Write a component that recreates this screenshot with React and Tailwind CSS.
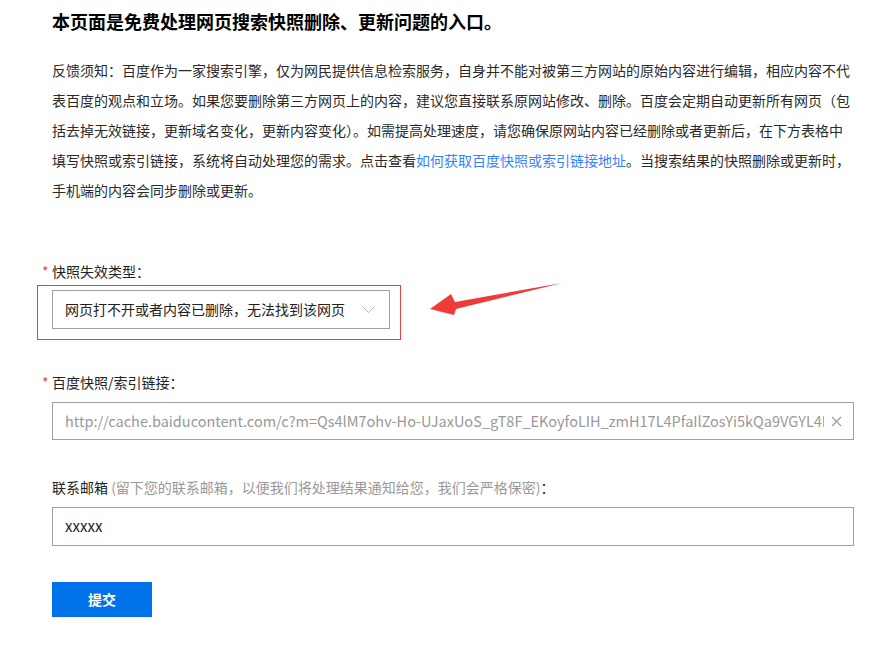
import { X } from 'lucide-react';

export default function App() {
  return (
    <div className="min-h-[660px] bg-white font-['Microsoft_YaHei','Noto_Sans_CJK_SC',sans-serif] text-[#333]">
      <div className="w-[802px] ml-[52px] pt-[7px]">
        <h1 className="text-[18px] leading-[28px] font-bold text-black">
          本页面是免费处理网页搜索快照删除、更新问题的入口。
        </h1>

        <p className="mt-[20px] text-[14px] leading-[30px] whitespace-nowrap text-[#2a2a2a]">
          反馈须知：百度作为一家搜索引擎，仅为网民提供信息检索服务，自身并不能对被第三方网站的原始内容进行编辑，相应内容不代<br />
          表百度的观点和立场。如果您要删除第三方网页上的内容，建议您直接联系原网站修改、删除。百度会定期自动更新所有网页（包<br />
          括去掉无效链接，更新域名变化，更新内容变化）。如需提高处理速度，请您确保原网站内容已经删除或者更新后，在下方表格中<br />
          填写快照或索引链接，系统将自动处理您的需求。点击查看
          <a className="text-[#3385ff]">如何获取百度快照或索引链接地址</a>
          。当搜索结果的快照删除或更新时，<br />
          手机端的内容会同步删除或更新。
        </p>

        {/* 快照失效类型 */}
        <div className="mt-[56px]">
          <label className="block text-[14px] leading-[20px] text-[#222]">
            <span className="inline-block w-[10px] -ml-[10px] text-[#e84040]">*</span>
            快照失效类型：
          </label>
          <div className="relative mt-[9px] w-[338px]">
            <div className="h-[39px] border border-[#a0a0a0] flex items-center justify-between pl-[12px] pr-[14px] text-[14px] text-[#222]">
              <span>网页打不开或者内容已删除，无法找到该网页</span>
              <svg width="13" height="8" viewBox="0 0 13 8" className="mt-[1px]">
                <polyline points="0.5,0.5 6.5,6.5 12.5,0.5" fill="none" stroke="#b5b5b5" strokeWidth="1" />
              </svg>
            </div>
            <div className="absolute left-[-15px] top-[-5px] w-[364px] h-[55px] border border-[#e84040] pointer-events-none" />
            <svg className="absolute left-[373px] top-[-11px]" width="145" height="40" viewBox="0 0 145 40">
              <polygon points="5,30 26,15 30,23 137,4 31,30 29,36" fill="#f03b3b" />
            </svg>
          </div>
        </div>

        {/* 百度快照/索引链接 */}
        <div className="mt-[43px]">
          <label className="block text-[14px] leading-[20px] text-[#222]">
            <span className="inline-block w-[10px] -ml-[10px] text-[#e84040]">*</span>
            百度快照/索引链接：
          </label>
          <div className="mt-[10px] h-[38px] border border-[#a0a0a0] flex items-center pl-[12px] pr-[8px]">
            <div className="flex-1 overflow-hidden whitespace-nowrap text-[14.5px] text-[#999]">
              http://cache.baiducontent.com/c?m=Qs4lM7ohv-Ho-UJaxUoS_gT8F_EKoyfoLIH_zmH17L4PfaIlZosYi5kQa9VGYL4N
            </div>
            <X className="w-[17px] h-[17px] ml-[4px] text-[#999]" strokeWidth={1.5} />
          </div>
        </div>

        {/* 联系邮箱 */}
        <div className="mt-[37px]">
          <label className="block text-[14px] leading-[20px] text-[#222]">
            联系邮箱 <span className="text-[#999]">(留下您的联系邮箱，以便我们将处理结果通知给您，我们会严格保密)</span>：
          </label>
          <div className="mt-[10px] h-[39px] border border-[#a0a0a0] flex items-center pl-[12px] text-[15px] text-[#222]">
            xxxxx
          </div>
        </div>

        <button className="mt-[36px] w-[100px] h-[35px] bg-[#0073eb] text-white text-[14px] font-bold">
          提交
        </button>
      </div>
    </div>
  );
}
